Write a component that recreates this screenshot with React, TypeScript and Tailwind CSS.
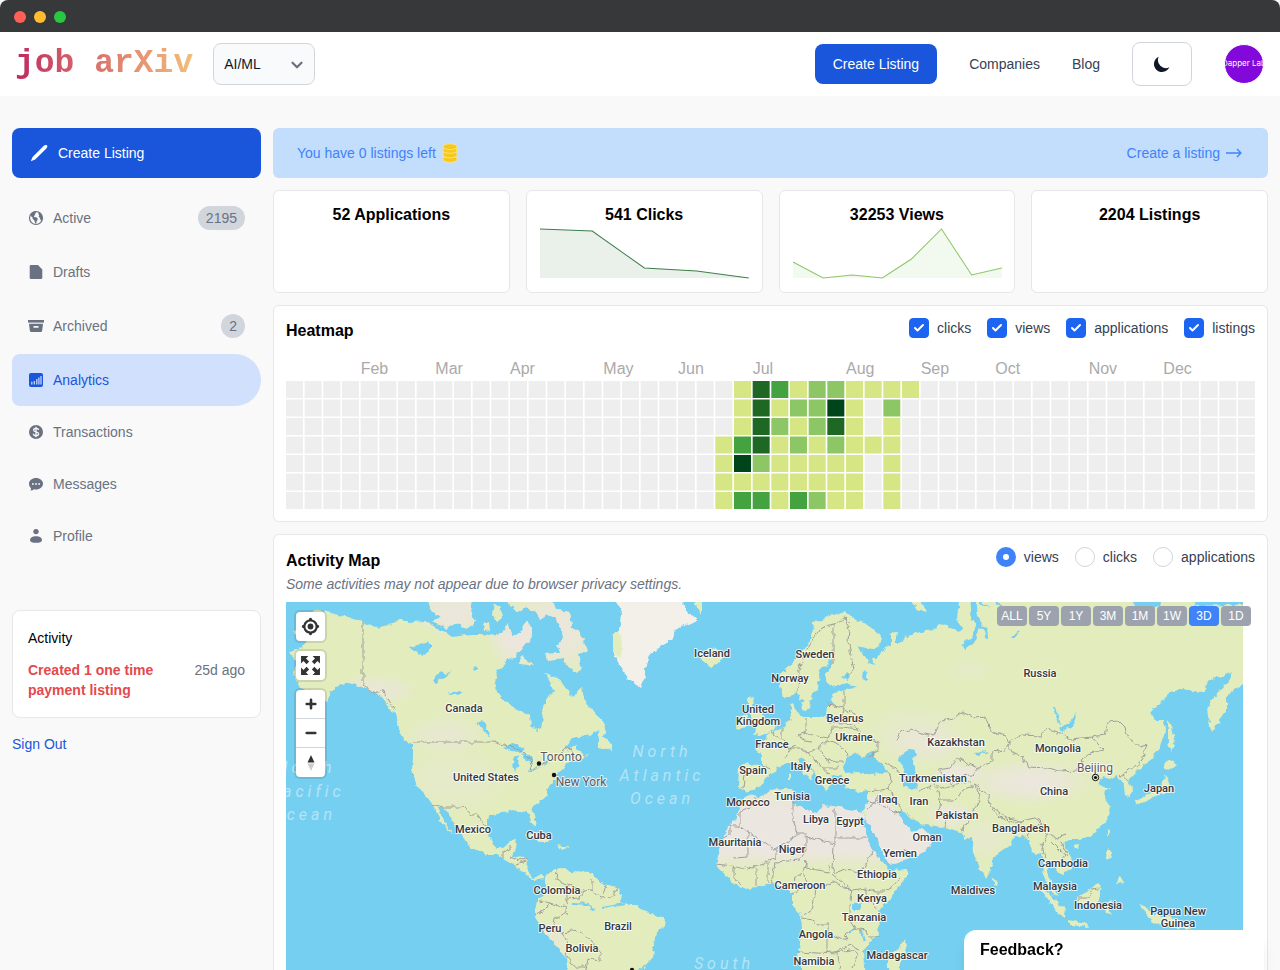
import { useState } from "react";
import type { ReactNode } from "react";
import { Check, ChevronDown } from "lucide-react";

/* ---------- icons ---------- */

function PencilIcon() {
  return (
    <svg width="18" height="18" viewBox="0 0 18 18" fill="currentColor" aria-hidden="true">
      <path d="M.8 17.300l1.800-4.300L13.300 2.300C14.600 1 15.900.5 16.900 1.300s.4 2.300-.8 3.500L5.200 15.600z" />
    </svg>
  );
}

function MoonIcon() {
  return (
    <svg width="20" height="20" viewBox="0 0 20 20" fill="currentColor" aria-hidden="true">
      <path d="M17.293 13.293A8 8 0 016.707 2.707a8.001 8.001 0 1010.586 10.586z" />
    </svg>
  );
}

function CoinsIcon() {
  return (
    <svg width="16" height="20" viewBox="0 0 16 20" aria-hidden="true">
      <g fill="#f8c81c" stroke="#fbe48a" strokeWidth="1">
        <path d="M1 14v2.500c0 1.600 3.100 2.800 7 2.800s7-1.200 7-2.800V14z" />
        <path d="M1 9v3c0 1.600 3.100 2.800 7 2.800s7-1.200 7-2.800V9z" />
        <path d="M1 4v3.500c0 1.600 3.100 2.800 7 2.800s7-1.200 7-2.800V4z" />
        <ellipse cx="8" cy="3.700" rx="7" ry="2.900" />
      </g>
    </svg>
  );
}

function ArrowIcon() {
  return (
    <svg width="16" height="12" viewBox="0 0 16 12" fill="none" stroke="currentColor" strokeWidth="1.300" aria-hidden="true">
      <path d="M0 6h15M11 2l4 4-4 4" strokeLinejoin="round" />
    </svg>
  );
}

function NavIcon({ children }: { children: ReactNode }) {
  return (
    <svg width="16" height="16" viewBox="0 0 16 16" fill="currentColor" className="shrink-0" aria-hidden="true">
      {children}
    </svg>
  );
}

const ICONS = {
  globe: (
    <NavIcon>
      <circle cx="8" cy="8" r="6.500" fill="none" stroke="currentColor" strokeWidth="1.200" />
      <path d="M2.500 4.600C3.700 2.800 5.300 1.800 7.300 1.500l1.200 1.300-1.700 1 .4 1.300-1.400.9.500 1 1.900.2 1.500 1.400-.2 1.500-1 1.300-.1 2-1.100.2-.9-3-1.600-1.500-.4-1.800-1.500-1z" />
      <path d="M10.800 2.200l2.500 2.100 1.100 2.500.2 2-1.200 1.800-1-.5-.3-2.200-1.400-1.200.5-1.700-1-1.300z" />
    </NavIcon>
  ),
  file: (
    <NavIcon>
      <path d="M3 1h7L14.300 5.500V14a1.200 1.200 0 01-1.200 1H3a1.200 1.200 0 01-1.300-1.200V2.300C1.700 1.500 2.200 1 3 1z" />
    </NavIcon>
  ),
  archive: (
    <NavIcon>
      <path d="M0 2h16v2.600H0z" />
      <path fillRule="evenodd" d="M1 5.800h14l-.9 7.200c-.1.600-.5 1-1.100 1H3c-.6 0-1-.4-1.100-1zM5.500 8v1.800h5V8z" />
    </NavIcon>
  ),
  chart: (
    <NavIcon>
      <rect x="1" y="1" width="14" height="14" rx="2" />
      <path d="M3.800 12.500V9.800M6.300 12.500V9M8.800 12.500V7M10.900 12.500V5.500M13 12.500V4" stroke="#d1e0fc" strokeWidth="1.200" />
    </NavIcon>
  ),
  dollar: (
    <NavIcon>
      <circle cx="8" cy="8" r="7" />
      <path d="M10.500 6c-.1-1.100-1.100-1.700-2.500-1.700S5.600 5 5.600 6.100 6.700 7.600 8 7.900s2.600.7 2.600 1.900-1.100 1.900-2.600 1.900-2.600-.7-2.600-1.900M8 2.800v10.400" fill="none" stroke="#f9f9f9" strokeWidth="1.300" />
    </NavIcon>
  ),
  chat: (
    <NavIcon>
      <path d="M8 2c3.900 0 7 2.500 7 5.700s-3.100 5.800-7 5.800c-.7 0-1.300-.1-1.900-.2-1 .9-2.400 1.300-3.700 1.200.5-.8.700-1.500.6-2.300C1.700 11 1 9.400 1 7.700 1 4.500 4.100 2 8 2z" />
      <g fill="#f9f9f9">
        <circle cx="4.900" cy="8" r=".9" />
        <circle cx="8" cy="8" r=".9" />
        <circle cx="11.100" cy="8" r=".9" />
      </g>
    </NavIcon>
  ),
  person: (
    <NavIcon>
      <circle cx="8" cy="3.600" r="2.700" />
      <path d="M8 8.200c3.400 0 6 1.600 6 3.700 0 1.900-2.400 2.900-6 2.900s-6-1-6-2.900c0-2.100 2.600-3.700 6-3.700z" />
    </NavIcon>
  ),
};

/* ---------- header ---------- */

function Header() {
  return (
    <header className="flex h-16 shrink-0 items-center bg-white pr-4 pl-[15px]">
      <a
        href="#"
        className="bg-linear-to-r from-[#bd2560] to-[#f3bd78] bg-clip-text font-['Liberation_Mono',monospace] text-[33px] leading-10 font-bold text-transparent"
      >
        job arXiv
      </a>
      <div className="relative ml-5">
        <select
          aria-label="Category"
          className="h-[42px] w-[102px] appearance-none rounded-lg border border-gray-300 bg-gray-50 px-[10px] text-sm text-gray-900"
        >
          <option>AI/ML</option>
          <option>Web</option>
        </select>
        <ChevronDown size={18} strokeWidth={3} className="pointer-events-none absolute top-[13px] right-[9px] text-gray-500" />
      </div>
      <nav className="ml-auto flex items-center gap-8 text-sm text-gray-700">
        <button className="h-10 rounded-lg bg-[#1a56db] px-[18px] text-white">Create Listing</button>
        <a href="#companies">Companies</a>
        <a href="#blog">Blog</a>
        <button
          aria-label="Toggle dark mode"
          className="flex h-11 w-[60px] items-center justify-center rounded-lg border border-gray-300 text-gray-900"
        >
          <MoonIcon />
        </button>
        <button className="flex size-10 items-center justify-center overflow-hidden rounded-full border border-white bg-[#8209d9] font-['Inter',sans-serif] text-[8px] whitespace-nowrap text-white">
          Dapper Lab
        </button>
      </nav>
    </header>
  );
}

/* ---------- sidebar ---------- */

const LISTING_LINKS = [
  { label: "Active", icon: ICONS.globe, count: 2195 },
  { label: "Drafts", icon: ICONS.file },
  { label: "Archived", icon: ICONS.archive, count: 2 },
];

const ACCOUNT_LINKS = [
  { label: "Analytics", icon: ICONS.chart, active: true },
  { label: "Transactions", icon: ICONS.dollar },
  { label: "Messages", icon: ICONS.chat },
  { label: "Profile", icon: ICONS.person },
];

function Sidebar() {
  return (
    <aside className="w-[249px] shrink-0 text-sm">
      <button className="flex h-[50px] w-full items-center gap-[10px] rounded-lg bg-[#1a56db] px-[18px] text-white">
        <PencilIcon />
        Create Listing
      </button>
      <nav className="mt-[14px] text-gray-500">
        {LISTING_LINKS.map(({ label, icon, count }) => (
          <a key={label} href="#" className="mb-[2px] flex h-[52px] items-center gap-[9px] px-4">
            {icon}
            {label}
            {count && <span className="ml-auto rounded-full bg-gray-300 px-2 leading-6">{count}</span>}
          </a>
        ))}
        {ACCOUNT_LINKS.map(({ label, icon, active }) => (
          <a
            key={label}
            href="#"
            className={
              active
                ? "flex h-[52px] items-center gap-[9px] rounded-l-lg rounded-r-[26px] bg-[#d1e0fc] px-4 text-[#1a56db]"
                : "flex h-[52px] items-center gap-[9px] px-4"
            }
          >
            {icon}
            {label}
          </a>
        ))}
      </nav>
      <section className="mt-12 rounded-lg border border-gray-200 bg-white px-[15px] pt-[17px] pb-[17px] leading-5">
        <h2 className="text-black">Activity</h2>
        <div className="mt-3 flex justify-between">
          <p className="w-36 font-bold text-[#e5484d]">Created 1 one time payment listing</p>
          <span className="text-gray-500">25d ago</span>
        </div>
      </section>
      <a href="#" className="mt-4 inline-block leading-5 text-[#1a56db]">
        Sign Out
      </a>
    </aside>
  );
}

/* ---------- stat cards ---------- */

type Stat = { title: string; color?: string; points?: string };

const STATS: Stat[] = [
  { title: "52 Applications" },
  { title: "541 Clicks", color: "#3f7f4a", points: "1,2 53,4 105,41 157,44 209,51" },
  { title: "32253 Views", color: "#8cc665", points: "1,35 31,51 60,48 90,51 119,32 149,2 179,48 209,41" },
  { title: "2204 Listings" },
];

function StatCard({ title, color, points }: Stat) {
  return (
    <div className="rounded-md border border-gray-200 bg-white p-3 pb-[13px]">
      <h2 className="text-center leading-6 font-bold text-black">{title}</h2>
      <div className="h-[52px]">
        {points && (
          <svg viewBox="0 0 210 52" preserveAspectRatio="none" className="h-full w-full" aria-hidden="true">
            <polygon points={`1,51 ${points} 209,51`} fill={color} fillOpacity=".11" />
            <polyline points={points} fill="none" stroke={color} strokeWidth="1" />
          </svg>
        )}
      </div>
    </div>
  );
}

/* ---------- heatmap ---------- */

const MONTHS: [string, number][] = [
  ["Feb", 4], ["Mar", 8], ["Apr", 12], ["May", 17], ["Jun", 21], ["Jul", 25],
  ["Aug", 30], ["Sep", 34], ["Oct", 38], ["Nov", 43], ["Dec", 47],
];

const WEEKS = 52;
const CELL = 17;
const STEP = (969 - CELL) / (WEEKS - 1);
const FIRST_WEEK = 23;
const LEVELS = ["#eeeeee", "#d6e685", "#8cc665", "#44a340", "#1e6823", "#00441b"];

// one string per weekday, one digit per week starting at FIRST_WEEK
const ACTIVITY = [
  "01431221111",
  "01412251020",
  "01421241010",
  "13412121110",
  "15211111010",
  "11111111010",
  "13313211010",
];

function Heatmap() {
  return (
    <svg viewBox="0 0 969 152" className="mt-[14px] w-full" role="img" aria-label="Activity by week">
      {MONTHS.map(([name, week]) => (
        <text key={name} x={week * STEP} y="17" fontSize="16" fill="#aaaaaa">
          {name}
        </text>
      ))}
      {ACTIVITY.map((row, day) =>
        Array.from({ length: WEEKS }, (_, week) => (
          <rect
            key={`${day}-${week}`}
            x={week * STEP}
            y={24 + day * 18.5}
            width={CELL}
            height={CELL}
            fill={LEVELS[Number(row[week - FIRST_WEEK] ?? 0)]}
          />
        ))
      )}
    </svg>
  );
}

function CheckOption({ label }: { label: string }) {
  return (
    <label className="flex items-center gap-2">
      <span className="relative size-5">
        <input type="checkbox" defaultChecked className="peer block size-5 appearance-none rounded border border-gray-300 checked:border-[#1c64f2] checked:bg-[#1c64f2]" />
        <Check size={12} strokeWidth={4} className="pointer-events-none absolute top-1 left-1 hidden text-white peer-checked:block" />
      </span>
      {label}
    </label>
  );
}

/* ---------- map ---------- */

const LAND = [
  // North and Central America
  "313,612 320,610 335,614 345,616 363,622 375,628 385,626 392,624 401,618 410,622 425,621 435,627 445,632 452,637 460,636 470,634 480,634 490,635 497,634 503,632 508,624 513,636 520,633 524,624 528,621 532,630 531,642 524,645 519,652 516,656 505,662 497,673 495,683 497,692 505,702 515,708 525,713 530,715 531,725 537,731 541,729 543,718 541,710 547,700 553,690 550,682 545,673 557,677 562,683 567,690 575,698 578,690 582,687 585,703 593,710 603,722 605,727 590,735 580,737 573,738 564,750 577,745 577,750 585,756 593,753 580,759 567,763 563,770 557,775 552,783 547,788 547,795 535,805 533,812 536,825 533,826 529,815 525,812 513,810 507,812 493,815 487,820 487,828 492,843 497,848 503,848 510,842 517,841 515,848 512,857 527,858 526,870 533,877 542,875 545,879 537,880 530,877 523,873 515,865 503,858 498,855 487,855 470,847 463,835 455,825 447,813 442,807 438,808 443,818 453,835 450,832 440,820 433,805 427,797 418,788 415,780 412,770 413,757 413,745 403,738 398,727 395,713 390,710 382,698 377,693 365,688 350,683 335,687 330,693 327,702 313,690 300,688 293,673 297,663 290,652 303,647 307,640 293,632 297,627",
  // South America
  "545,878 547,873 553,870 562,868 570,872 592,873 600,883 617,887 622,897 620,903 632,904 640,906 647,912 665,918 664,925 655,937 653,957 645,967 632,974 622,1000 565,1000 567,970 566,957 557,947 548,937 538,922 535,918 535,910 537,900 542,895 545,887",
  // Europe and Asia
  "813,623 833,615 845,612 852,618 863,622 877,632 882,638 879,647 872,649 858,645 863,655 868,662 875,665 872,658 878,658 882,650 890,647 890,633 897,632 895,643 902,643 905,637 920,632 933,630 940,623 947,627 957,630 960,633 962,627 957,620 958,608 957,596 1260,596 1260,676 1243,685 1233,690 1227,697 1227,710 1220,720 1212,732 1208,720 1209,703 1217,693 1228,682 1233,672 1222,677 1215,677 1208,682 1203,692 1193,691 1183,689 1170,692 1160,702 1150,713 1155,720 1163,720 1165,730 1160,747 1150,760 1140,768 1133,775 1128,780 1132,788 1131,797 1125,796 1124,787 1120,780 1117,775 1110,779 1103,777 1098,783 1103,788 1110,788 1103,793 1105,798 1110,808 1107,820 1097,832 1087,837 1077,840 1068,840 1063,843 1072,857 1073,867 1063,875 1058,872 1053,863 1048,862 1047,873 1053,885 1058,897 1054,895 1046,882 1043,875 1044,863 1042,853 1035,855 1028,840 1023,835 1013,838 1010,845 995,855 992,863 990,873 985,878 980,870 973,852 972,837 965,840 960,832 945,827 925,825 913,820 902,810 898,812 903,822 908,830 912,832 922,828 933,838 930,847 917,857 890,865 885,858 877,838 865,817 863,812 868,802 868,790 857,792 845,787 842,780 840,775 830,777 833,783 827,790 820,785 818,777 810,767 800,757 797,758 800,763 813,773 812,780 802,772 793,763 787,763 777,767 773,772 767,777 763,785 753,790 747,791 738,787 739,767 743,764 762,765 762,753 755,750 760,745 770,733 782,728 787,722 792,717 790,705 793,703 797,713 807,717 820,717 827,715 828,705 833,705 830,697 837,692 845,690 857,687 847,683 833,687 827,683 825,675 833,662 830,660 820,670 818,690 813,693 810,707 804,711 800,702 797,692 792,695 783,697 780,687 780,673 793,662 803,650 812,637",
  // Baffin and the Arctic islands
  "410,600 418,602 428,602 432,612 441,616 433,622 447,629 455,623 468,628 475,622 470,612 472,600",
  "494,604 500,606 502,618 496,622 492,614",
  "483,624 490,622 491,630 484,631",
  "507,600 550,600 557,610 570,612 572,627 580,634 588,647 587,653 578,655 582,668 578,673 570,668 563,658 547,660 545,654 560,653 558,645 563,638 562,630 557,618 547,615 540,620 537,613 527,608 517,612",
  "521,655 526,659 535,665 527,665 520,664",
  // islands
  "600,725 604,726 606,732 603,738 612,744 612,750 598,747 598,740",
  "698,652 710,649 722,651 724,657 717,664 710,667 703,661",
  "747,698 755,697 753,705 760,713 768,723 778,727 767,734 752,736 757,728 752,722 750,713",
  "738,718 747,715 747,727 737,729",
  "912,600 920,602 926,612 918,610",
  "695,600 702,602 702,614 696,608",
  "525,835 534,833 545,838 552,842 543,842",
  "558,845 569,847 562,850",
  "788,772 791,773 791,781 788,781",
  "905,939 907,945 902,960 898,974 892,980 888,970 888,957 898,950",
  "993,877 997,883 993,885",
  "1040,888 1048,892 1065,910 1064,918 1057,912 1045,895",
  "1067,920 1087,923 1089,927 1070,925",
  "1077,898 1090,890 1097,883 1102,888 1098,902 1090,907 1078,905",
  "1104,902 1114,900 1107,906 1112,915 1106,914",
  "1108,849 1112,852 1110,860 1106,858",
  "1120,875 1124,882 1116,883",
  "1108,829 1111,831 1107,837",
  "1074,845 1079,844 1078,849 1075,849",
  "1138,904 1147,907 1153,915 1170,917 1187,923 1190,930 1173,927 1153,923 1145,912",
  "1166,775 1169,783 1165,792 1153,798 1137,805 1135,801 1147,795 1160,788",
  "1168,759 1177,764 1170,770 1164,767",
  "1168,719 1171,723 1175,740 1171,753 1168,743",
];

const AFRICA =
  "747,794 758,797 770,791 792,788 795,795 792,803 807,810 817,813 822,805 833,806 853,810 863,812 866,819 859,817 868,838 872,850 887,867 889,870 908,869 907,877 887,902 878,913 879,933 863,950 866,1000 808,1000 802,970 798,957 800,943 802,927 800,913 792,905 792,890 780,888 773,882 760,887 742,888 732,882 718,868 717,860 720,845 727,828 737,818 739,807";

const GREENLAND =
  "615,598 622,613 620,630 613,635 613,647 617,660 622,670 628,678 640,687 645,677 645,668 650,653 660,648 672,638 675,630 698,620 692,615 685,610 682,598";

const ARABIA =
  "868,797 884,797 898,812 903,822 908,830 912,832 922,828 933,838 930,847 917,857 890,865 885,858 877,838 865,817";

const LAKES = [
  "410,648 418,645 430,642 430,650 422,657 415,652",
  "433,681 440,670 446,674 453,670 444,678 435,683",
  "448,694 456,691 463,692 452,696",
  "477,722 482,720 491,736 487,735 482,729",
  "474,668 478,666 478,670 474,671",
  "503,748 512,743 525,748 518,752 510,751",
  "514,758 519,755 518,765 515,772 513,765",
  "521,753 530,755 533,763 525,761",
  "527,773 540,767 533,773",
  "541,764 549,761 546,765",
  // Black Sea, Azov, Caspian
  "847,758 853,753 863,758 870,753 877,750 873,757 883,765 888,772 873,775 857,772 845,773 843,767",
  "898,760 902,753 912,749 917,753 912,760 917,767 915,777 918,787 910,790 903,783 905,773",
  "846,673 850,676 847,681 842,678",
  "863,670 867,673 867,681 862,679",
  "1077,713 1073,726 1062,732 1059,730 1070,722",
  "973,753 989,751 978,756",
  "1130,596 1163,596 1160,607 1145,610 1136,607",
  "1190,596 1260,596 1260,604 1195,606",
  "853,905 861,903 860,911 854,911",
];

const BORDERS = [
  // Americas
  "M363 622V685L370 690L376 693L382 689L395 712",
  "M413 742H493L498 744L510 746L525 753L532 762L530 771L545 762L557 757L563 750L570 748L574 757",
  "M432 804L443 807L463 807L472 815H478L486 827",
  "M503 858V852L510 850V845M510 857L520 861L527 858M516 865L526 861",
  "M557 870L556 880L566 885L583 890L580 898L567 899L566 913L555 918L553 931M566 885V900M537 900L550 903L545 910L536 915M550 903L566 908",
  "M583 890L592 889L600 898L612 897L617 887M592 889V878M603 895L606 885",
  "M563 933L576 930L590 940L600 952V960L588 958L586 970M563 933L568 944L566 955L575 967L586 967M553 931L563 933",
  // Scandinavia and Europe
  "M798 692L799 670L804 655L812 640L822 628L833 624L845 618L851 622M833 624V662M845 618L849 630L848 640L851 655L854 670L845 678",
  "M844 690L844 708L855 715L857 723M828 705L844 708M826 717L828 722L845 723L858 728M844 708L842 720",
  "M806 718V732L813 735L828 738L832 728M782 728V739L788 748L795 745M770 732L781 740M799 735L806 732M799 735L803 741L812 742M788 748L802 748L808 753L818 748L828 740M786 757L790 750M808 753L816 760L822 768L830 774M818 748L824 757L830 762M832 728H843L858 730L870 740L878 742V752L868 757M828 740L840 745L846 750L847 757M824 757L835 762L844 762M762 766L771 769M743 768L745 775L743 788M822 768H838",
  // Asia
  "M897 742L900 733L912 729L920 733L934 736L940 722L953 718L962 712L975 718L985 717L992 732L1006 736L1010 742L1004 750L992 752L992 762L978 768L968 764L958 758L950 768L938 770",
  "M1010 742L1022 735L1042 736L1046 728L1058 732L1070 739L1092 737L1097 743L1104 750L1090 753L1082 760L1078 770L1060 771L1048 768L1028 767L1022 757L1012 752L1008 744",
  "M1092 737L1105 735L1108 722L1118 721L1125 728L1128 738L1139 747L1147 745L1142 760L1135 766L1120 777",
  "M885 763L897 770L905 776M888 772L892 782L888 790L895 798L903 812M868 791L890 789M892 792L895 800M868 802L880 804L895 813L900 812M868 808L875 802L878 796",
  "M920 790L935 785L945 788M938 770L945 778L952 783L960 776L972 775L980 768M937 787L940 800L938 812L946 820L945 827M940 800L955 800L962 790L975 785M945 788L957 785L970 782M962 832L968 820L975 808L980 795L975 785",
  "M975 785L988 795L990 805L1005 817L1020 821L1035 818L1043 823M992 809L1000 818L1016 823L1023 821M1016 823L1018 833M1028 838L1032 828L1043 823L1047 835L1055 838L1066 835M1047 835L1042 846L1046 860M1052 842L1060 850L1066 855L1060 862M1060 840L1068 855M917 857L905 850",
  "M1078 898L1088 898L1092 889L1100 888M1128 780L1122 775",
  // Africa
  "M739 826H730V835L720 840M740 812V826L775 850L798 834L793 820V800M748 829V857L733 858M740 812L752 806L756 798M776 849V857L765 862L752 868L745 866M775 862L800 860L806 850V836L834 844L833 870M798 834L806 834M835 808V843M835 838H868M717 864L732 866L748 870L750 868M734 866V878L742 885M756 868V886M768 862V882M775 862L772 882M806 861L803 872L794 880M806 861V868L828 872L830 865M830 865L836 873L845 870L860 872L868 860L872 852M833 874L852 890L866 888L875 892H885L900 878M803 872L808 885L800 890L792 894M808 890L816 888L815 895L812 910L803 916M816 888L833 882L845 888L853 890L850 905L850 920L855 928L845 935L848 940L842 940L835 936L828 935V925L818 925L812 920L802 918M866 888L866 900L878 910M855 928L865 930L868 936H879M827 936V951L836 953L848 945L860 950M798 952L838 954L840 968M836 953L850 950L858 955L852 968",
];

type Place = { name: string; x: number; y: number };

const COUNTRIES: Place[] = [
  { name: "Iceland", x: 712, y: 657 }, { name: "Sweden", x: 815, y: 658 }, { name: "Norway", x: 790, y: 682 },
  { name: "United", x: 758, y: 713 }, { name: "Kingdom", x: 758, y: 725 }, { name: "Belarus", x: 845, y: 722 },
  { name: "Ukraine", x: 854, y: 741 }, { name: "France", x: 772, y: 748 }, { name: "Spain", x: 753, y: 774 },
  { name: "Italy", x: 801, y: 770 }, { name: "Greece", x: 832, y: 784 }, { name: "Tunisia", x: 792, y: 800 },
  { name: "Morocco", x: 748, y: 806 }, { name: "Libya", x: 816, y: 823 }, { name: "Egypt", x: 850, y: 825 },
  { name: "Mauritania", x: 735, y: 846 }, { name: "Niger", x: 792, y: 853 }, { name: "Cameroon", x: 800, y: 889 },
  { name: "Ethiopia", x: 877, y: 878 }, { name: "Kenya", x: 872, y: 902 }, { name: "Tanzania", x: 864, y: 921 },
  { name: "Angola", x: 816, y: 938 }, { name: "Namibia", x: 814, y: 965 }, { name: "Madagascar", x: 897, y: 959 },
  { name: "Yemen", x: 900, y: 857 }, { name: "Oman", x: 927, y: 841 }, { name: "Iraq", x: 888, y: 803 },
  { name: "Iran", x: 919, y: 805 }, { name: "Pakistan", x: 957, y: 819 }, { name: "Turkmenistan", x: 933, y: 782 },
  { name: "Kazakhstan", x: 956, y: 746 }, { name: "Russia", x: 1040, y: 677 }, { name: "Mongolia", x: 1058, y: 752 },
  { name: "China", x: 1054, y: 795 }, { name: "Japan", x: 1159, y: 792 }, { name: "Bangladesh", x: 1021, y: 832 },
  { name: "Cambodia", x: 1063, y: 867 }, { name: "Malaysia", x: 1055, y: 890 }, { name: "Maldives", x: 973, y: 894 },
  { name: "Indonesia", x: 1098, y: 909 }, { name: "Papua New", x: 1178, y: 915 }, { name: "Guinea", x: 1178, y: 927 },
  { name: "Canada", x: 464, y: 712 }, { name: "United States", x: 486, y: 781 }, { name: "Mexico", x: 473, y: 833 },
  { name: "Cuba", x: 539, y: 839 }, { name: "Colombia", x: 557, y: 894 }, { name: "Peru", x: 550, y: 932 },
  { name: "Bolivia", x: 582, y: 952 }, { name: "Brazil", x: 618, y: 930 },
];

const CITIES: Place[] = [
  { name: "Toronto", x: 561, y: 761 }, { name: "New York", x: 581, y: 786 }, { name: "Beijing", x: 1095, y: 772 },
];

const OCEANS: Place[] = [
  { name: "North", x: 662, y: 757 }, { name: "Atlantic", x: 662, y: 781 }, { name: "Ocean", x: 662, y: 804 },
  { name: "North", x: 306, y: 773 }, { name: "Pacific", x: 307, y: 797 }, { name: "Ocean", x: 304, y: 820 },
  { name: "South", x: 724, y: 969 },
];

function WorldMap() {
  return (
    <svg viewBox="286 602 957 400" className="w-full bg-[#75cff0] font-['Roboto',sans-serif]" role="img" aria-label="World map">
      <defs>
        <linearGradient id="africa" gradientUnits="userSpaceOnUse" x1="0" y1="790" x2="0" y2="1000">
          <stop offset="0" stopColor="#e6e8cc" />
          <stop offset=".1" stopColor="#ece6e0" />
          <stop offset=".29" stopColor="#ece6e0" />
          <stop offset=".38" stopColor="#e2ecbd" />
          <stop offset="1" stopColor="#e2ecbd" />
        </linearGradient>
        <radialGradient id="arid">
          <stop offset="0" stopColor="#ece6df" />
          <stop offset=".5" stopColor="#ece6df" stopOpacity=".7" />
          <stop offset="1" stopColor="#ece6df" stopOpacity="0" />
        </radialGradient>
        {/* roughens straight edges into coastline */}
        <filter id="coast" filterUnits="userSpaceOnUse" x="286" y="602" width="957" height="400" colorInterpolationFilters="sRGB">
          <feTurbulence type="fractalNoise" baseFrequency=".16" numOctaves="2" seed="4" />
          <feDisplacementMap in="SourceGraphic" scale="6" xChannelSelector="R" yChannelSelector="G" />
        </filter>
        <clipPath id="land">
          {LAND.map((points) => (
            <polygon key={points} points={points} />
          ))}
        </clipPath>
      </defs>

      <g filter="url(#coast)">
        <g fill="#e2ecbd">
          {LAND.map((points) => (
            <polygon key={points} points={points} />
          ))}
        </g>
        <g clipPath="url(#land)" fill="url(#arid)">
          <ellipse cx="455" cy="612" rx="45" ry="26" />
          <ellipse cx="555" cy="630" rx="60" ry="48" />
          <ellipse cx="515" cy="640" rx="30" ry="28" />
          <ellipse cx="375" cy="690" rx="45" ry="16" opacity=".8" />
          <ellipse cx="445" cy="735" rx="42" ry="22" opacity=".6" />
          <ellipse cx="455" cy="780" rx="60" ry="34" opacity=".4" />
          <ellipse cx="1030" cy="782" rx="66" ry="24" />
          <ellipse cx="925" cy="745" rx="50" ry="22" opacity=".7" />
          <ellipse cx="915" cy="728" rx="55" ry="24" opacity=".4" />
          <ellipse cx="960" cy="773" rx="30" ry="12" />
          <ellipse cx="950" cy="815" rx="26" ry="14" />
          <ellipse cx="985" cy="838" rx="24" ry="24" opacity=".5" />
          <ellipse cx="550" cy="942" rx="22" ry="24" opacity=".6" />
          <ellipse cx="970" cy="670" rx="26" ry="12" opacity=".3" />
        </g>
        <polygon points={AFRICA} fill="url(#africa)" />
        <polygon points={ARABIA} fill="#ece6e0" />
        <polygon points={GREENLAND} fill="#f3f0ea" />
        <path d="M613 635L620 631L622 646L619 660L613 647Z" fill="#e2ecbd" />
        <g fill="#75cff0">
          {LAKES.map((points) => (
            <polygon key={points} points={points} />
          ))}
        </g>
        <g fill="none" stroke="#75cff0">
          <path d="M973 600L974 615L979 625L973 640L963 647" strokeWidth="5" />
          <path d="M979 627L986 629L987 638M980 602L990 608M994 600L1002 606" strokeWidth="2" />
          <path d="M573 903L587 904L595 911M602 908L625 904M1012 638L1019 631M1054 708L1060 724" strokeWidth="2" />
          <path d="M850 933L856 928M861 930L865 942" strokeWidth="2" />
          <path d="M798 704L803 700" strokeWidth="3" />
        </g>
        <g fill="none" stroke="#9f9f9a" strokeWidth="1" strokeLinejoin="round">
          {BORDERS.map((d) => (
            <path key={d} d={d} />
          ))}
        </g>
      </g>

      <g fill="#b4e4f6" fontSize="16" fontStyle="italic" textAnchor="middle" className="tracking-[4px]">
        {OCEANS.map(({ name, x, y }) => (
          <text key={`${name}-${x}`} x={x} y={y}>
            {name}
          </text>
        ))}
      </g>

      <g fontSize="11" textAnchor="middle" stroke="#ffffff" strokeOpacity=".75" strokeWidth="2" strokeLinejoin="round" paintOrder="stroke">
        <g fill="#35373d" fontWeight="500">
          {COUNTRIES.map(({ name, x, y }) => (
            <text key={name} x={x} y={y}>
              {name}
            </text>
          ))}
        </g>
        <g fill="#5a5a60" fontSize="12">
          {CITIES.map(({ name, x, y }) => (
            <text key={name} x={x} y={y}>
              {name}
            </text>
          ))}
        </g>
      </g>
      <g fill="#111111">
        <circle cx="539" cy="763.500" r="2.200" />
        <circle cx="554" cy="775" r="2.200" />
        <circle cx="632" cy="970" r="2.200" />
        <circle cx="1095.500" cy="777.500" r="1.600" />
        <circle cx="1095.500" cy="777.500" r="3.200" fill="none" stroke="#111111" />
      </g>
    </svg>
  );
}

function MapControls() {
  return (
    <div className="absolute top-[10px] left-[10px] flex flex-col gap-[10px] text-[#333333]">
      <button aria-label="Find my location" className="flex size-[29px] items-center justify-center rounded bg-white ring-2 ring-black/10">
        <svg width="29" height="29" viewBox="0 0 20 20" fill="currentColor" aria-hidden="true">
          <path d="M10 4C9 4 9 5 9 5v.1A5 5 0 005.100 9H5s-1 0-1 1 1 1 1 1h.1A5 5 0 009 14.900v.1s0 1 1 1 1-1 1-1v-.1a5 5 0 003.900-3.900h.1s1 0 1-1-1-1-1-1h-.1A5 5 0 0011 5.100V5s0-1-1-1zm0 2.500a3.500 3.500 0 110 7 3.500 3.500 0 110-7z" />
          <circle cx="10" cy="10" r="2" />
        </svg>
      </button>
      <button aria-label="Enter fullscreen" className="flex size-[29px] items-center justify-center rounded bg-white ring-2 ring-black/10">
        <svg width="21" height="21" viewBox="0 0 20 20" fill="currentColor" aria-hidden="true">
          <path d="M1 1h7L5.700 3.300l3 3-2.400 2.400-3-3L1 8zM19 1v7l-2.300-2.300-3 3-2.400-2.400 3-3L12 1zM1 19v-7l2.300 2.300 3-3 2.400 2.400-3 3L8 19zM19 19h-7l2.300-2.300-3-3 2.400-2.400 3 3L19 12z" />
        </svg>
      </button>
      <div className="w-[29px] divide-y divide-gray-300 rounded bg-white ring-2 ring-black/10">
        <button aria-label="Zoom in" className="flex h-[29px] w-full items-center justify-center">
          <svg width="12" height="12" viewBox="0 0 12 12" stroke="currentColor" strokeWidth="2.600" strokeLinecap="round" aria-hidden="true">
            <path d="M6 1.700v8.600M1.700 6h8.600" />
          </svg>
        </button>
        <button aria-label="Zoom out" className="flex h-[29px] w-full items-center justify-center">
          <svg width="12" height="12" viewBox="0 0 12 12" stroke="currentColor" strokeWidth="2.600" strokeLinecap="round" aria-hidden="true">
            <path d="M1.700 6h8.600" />
          </svg>
        </button>
        <button aria-label="Reset bearing to north" className="flex h-[29px] w-full items-center justify-center">
          <svg width="8" height="18" viewBox="0 0 8 18" aria-hidden="true">
            <path d="M4 1l3.500 7.500h-7z" fill="currentColor" />
            <path d="M4 17L.5 9.500h7z" fill="#cccccc" />
          </svg>
        </button>
      </div>
    </div>
  );
}

const RANGES = ["ALL", "5Y", "1Y", "3M", "1M", "1W", "3D", "1D"];

function ActivityMap() {
  const [range, setRange] = useState("3D");

  return (
    <section className="rounded-md border border-gray-200 bg-white p-3">
      <div className="flex items-start justify-between">
        <h2 className="mt-[2px] leading-6 font-bold text-black">Activity Map</h2>
        <div className="flex gap-4 text-sm text-gray-700">
          {["views", "clicks", "applications"].map((kind) => (
            <label key={kind} className="flex items-center gap-2">
              <input
                type="radio"
                name="kind"
                defaultChecked={kind === "views"}
                className="size-5 appearance-none rounded-full border border-gray-300 bg-white checked:border-[7px] checked:border-[#3f83f8]"
              />
              {kind}
            </label>
          ))}
        </div>
      </div>
      <p className="mt-px text-sm text-gray-500 italic">Some activities may not appear due to browser privacy settings.</p>
      <div className="relative mt-2">
        <div className="pr-3">
          <WorldMap />
        </div>
        <MapControls />
        <div className="absolute top-1 right-1 flex gap-[2px] text-xs text-white">
          {RANGES.map((item) => (
            <button
              key={item}
              onClick={() => setRange(item)}
              className={item === range ? "h-5 w-[30px] rounded bg-[#3f83f8]" : "h-5 w-[30px] rounded bg-[#9ca3af]"}
            >
              {item}
            </button>
          ))}
        </div>
      </div>
    </section>
  );
}

export default function App() {
  return (
    <div className="flex h-screen flex-col overflow-hidden bg-[#f9f9f9] font-['Liberation_Sans',Arial,sans-serif] text-base">
      <div className="flex h-8 shrink-0 items-center gap-2 rounded-t-lg bg-[#37383a] px-[14px] pt-[2px]">
        <span className="size-3 rounded-full bg-[#ff5f57]" />
        <span className="size-3 rounded-full bg-[#febc2e]" />
        <span className="size-3 rounded-full bg-[#28c840]" />
      </div>
      <Header />
      <div className="flex gap-3 px-3 pt-8">
        <Sidebar />
        <main className="flex min-w-0 flex-1 flex-col gap-3">
          <div className="flex h-[50px] shrink-0 items-center justify-between rounded-md bg-[#c3ddfd] px-6 text-sm text-[#3f83f8]">
            <span className="flex items-center gap-[6px]">
              You have 0 listings left <CoinsIcon />
            </span>
            <a href="#create" className="flex items-center gap-[6px] pr-[2px]">
              Create a listing <ArrowIcon />
            </a>
          </div>
          <div className="grid grid-cols-4 gap-4">
            {STATS.map((stat) => (
              <StatCard key={stat.title} {...stat} />
            ))}
          </div>
          <section className="rounded-md border border-gray-200 bg-white p-3">
            <div className="flex items-start justify-between">
              <h2 className="mt-px leading-6 font-bold text-black">Heatmap</h2>
              <div className="flex gap-4 text-sm text-gray-700">
                {["clicks", "views", "applications", "listings"].map((label) => (
                  <CheckOption key={label} label={label} />
                ))}
              </div>
            </div>
            <Heatmap />
          </section>
          <ActivityMap />
        </main>
      </div>
      <button className="fixed right-4 bottom-0 h-10 w-[300px] rounded-t-xl bg-white px-4 text-left font-bold text-black shadow-lg">
        Feedback?
      </button>
    </div>
  );
}
